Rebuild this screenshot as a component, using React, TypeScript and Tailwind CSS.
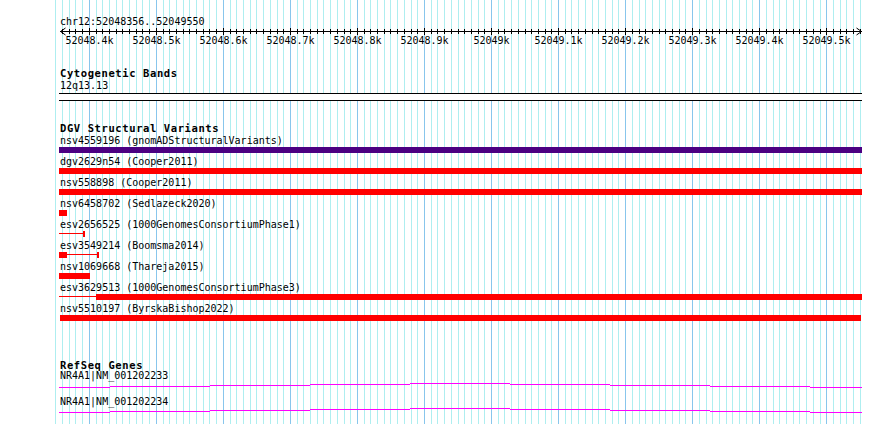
import React from "react";

const MONO = "font-['DejaVu_Sans_Mono',monospace]";

type G = { x: number; major: boolean };
const grid: G[] = (() => {
  const a: G[] = [];
  for (let k = -5; k <= 115; k++) {
    const x = 89.3 + k * 6.704;
    a.push({ x: Math.floor(x), major: k % 10 === 0 });
  }
  return a;
})();

const labels = [
  "52048.4k",
  "52048.5k",
  "52048.6k",
  "52048.7k",
  "52048.8k",
  "52048.9k",
  "52049k",
  "52049.1k",
  "52049.2k",
  "52049.3k",
  "52049.4k",
  "52049.5k",
];

type Shape = { x1: number; x2: number; kind: "bar" | "thin" | "cap" };
type Row = { label: string; color: string; shapes: Shape[] };

const rows: Row[] = [
  { label: "nsv4559196 (gnomADStructuralVariants)", color: "#4b0082", shapes: [{ x1: 59, x2: 862, kind: "bar" }] },
  { label: "dgv2629n54 (Cooper2011)", color: "#ff0000", shapes: [{ x1: 59, x2: 862, kind: "bar" }] },
  { label: "nsv558898 (Cooper2011)", color: "#ff0000", shapes: [{ x1: 59, x2: 862, kind: "bar" }] },
  { label: "nsv6458702 (Sedlazeck2020)", color: "#ff0000", shapes: [{ x1: 59, x2: 67, kind: "bar" }] },
  {
    label: "esv2656525 (1000GenomesConsortiumPhase1)",
    color: "#ff0000",
    shapes: [
      { x1: 59, x2: 84, kind: "thin" },
      { x1: 83, x2: 85, kind: "cap" },
    ],
  },
  {
    label: "esv3549214 (Boomsma2014)",
    color: "#ff0000",
    shapes: [
      { x1: 59, x2: 67, kind: "bar" },
      { x1: 67, x2: 98, kind: "thin" },
      { x1: 97, x2: 99, kind: "cap" },
    ],
  },
  { label: "nsv1069668 (Thareja2015)", color: "#ff0000", shapes: [{ x1: 59, x2: 90, kind: "bar" }] },
  {
    label: "esv3629513 (1000GenomesConsortiumPhase3)",
    color: "#ff0000",
    shapes: [
      { x1: 59, x2: 96, kind: "thin" },
      { x1: 96, x2: 862, kind: "bar" },
    ],
  },
  { label: "nsv5510197 (ByrskaBishop2022)", color: "#ff0000", shapes: [{ x1: 60, x2: 861, kind: "bar" }] },
];

const geneSegs: [number, number, number][] = [
  [59, 110, 4],
  [110, 210, 3],
  [210, 310, 2],
  [310, 410, 1],
  [410, 510, 0],
  [510, 610, 1],
  [610, 710, 2],
  [710, 810, 3],
  [810, 862, 4],
];

function GeneLine({ base }: { base: number }) {
  return (
    <svg width={890} height={8} className="block" shapeRendering="crispEdges">
      {geneSegs.map(([a, b, d], i) => (
        <rect key={i} x={a} y={base + d} width={b - a} height={1} fill="#ff00ff" />
      ))}
    </svg>
  );
}

function Text({ children, className = "" }: { children: React.ReactNode; className?: string }) {
  return (
    <div className={`h-[10px] pl-[60px] text-[10px] leading-[10px] text-black whitespace-nowrap ${MONO} ${className}`}>
      {children}
    </div>
  );
}

function Heading({ children, className = "" }: { children: React.ReactNode; className?: string }) {
  return (
    <div
      className={`h-[10px] pl-[60px] text-[10.5px] leading-[10px] font-bold tracking-[0.6px] text-black whitespace-nowrap ${MONO} ${className}`}
    >
      {children}
    </div>
  );
}

export default function App() {
  return (
    <div className="relative w-[890px] h-[424px] bg-white overflow-hidden">
      <svg className="absolute left-0 top-0" width={890} height={424} shapeRendering="crispEdges">
        {grid.map((g, i) => (
          <rect key={i} x={g.x} y={0} width={1} height={424} fill={g.major ? "#88c6ec" : "#aeeef0"} />
        ))}
      </svg>

      <div className="relative flex flex-col">
        <Text className="mt-[17px]">chr12:52048356..52049550</Text>

        <svg width={890} height={20} className="block">
          <g shapeRendering="crispEdges">
            <rect x={60} y={4} width={802} height={1} fill="#000" />
            {grid
              .filter((g) => g.x >= 60 && g.x <= 860)
              .map((g, i) =>
                g.major ? (
                  <rect key={i} x={g.x} y={1} width={1} height={7} fill="#000" />
                ) : (
                  <rect key={i} x={g.x} y={2} width={1} height={5} fill="#000" />
                )
              )}
          </g>
          <polyline points="65.5,1 60.5,4.5 65.5,8" fill="none" stroke="#000" strokeWidth={1} />
          <polyline points="856.5,1 861.5,4.5 856.5,8" fill="none" stroke="#000" strokeWidth={1} />
          {grid
            .filter((g) => g.major)
            .map((g, i) => (
              <text
                key={i}
                x={g.x + 0.5}
                y={17}
                textAnchor="middle"
                fontFamily="'DejaVu Sans Mono', monospace"
                fontSize={10}
                fill="#000"
              >
                {labels[i]}
              </text>
            ))}
        </svg>

        <Heading className="mt-[21px]">Cytogenetic Bands</Heading>
        <Text className="mt-[3px]">12q13.13</Text>

        <div className="mt-[2px] ml-[59px] w-[803px] h-[8px] bg-white border-y border-black" />

        <Heading className="mt-[22px]">DGV Structural Variants</Heading>

        <div className="mt-[3px] flex flex-col">
          {rows.map((r, i) => (
            <div key={i} className="flex flex-col h-[21px]">
              <Text>{r.label}</Text>
              <svg width={890} height={6} className="block mt-[1px]" shapeRendering="crispEdges">
                {r.shapes.map((s, j) =>
                  s.kind === "thin" ? (
                    <rect key={j} x={s.x1} y={2} width={s.x2 - s.x1} height={1} fill={r.color} />
                  ) : (
                    <rect key={j} x={s.x1} y={0} width={s.x2 - s.x1} height={6} fill={r.color} />
                  )
                )}
              </svg>
            </div>
          ))}
        </div>

        <Heading className="mt-[35px]">RefSeq Genes</Heading>
        <Text className="mt-[1px]">NR4A1|NM_001202233</Text>
        <GeneLine base={2} />
        <Text className="mt-[8px]">NR4A1|NM_001202234</Text>
        <GeneLine base={1} />
      </div>
    </div>
  );
}
